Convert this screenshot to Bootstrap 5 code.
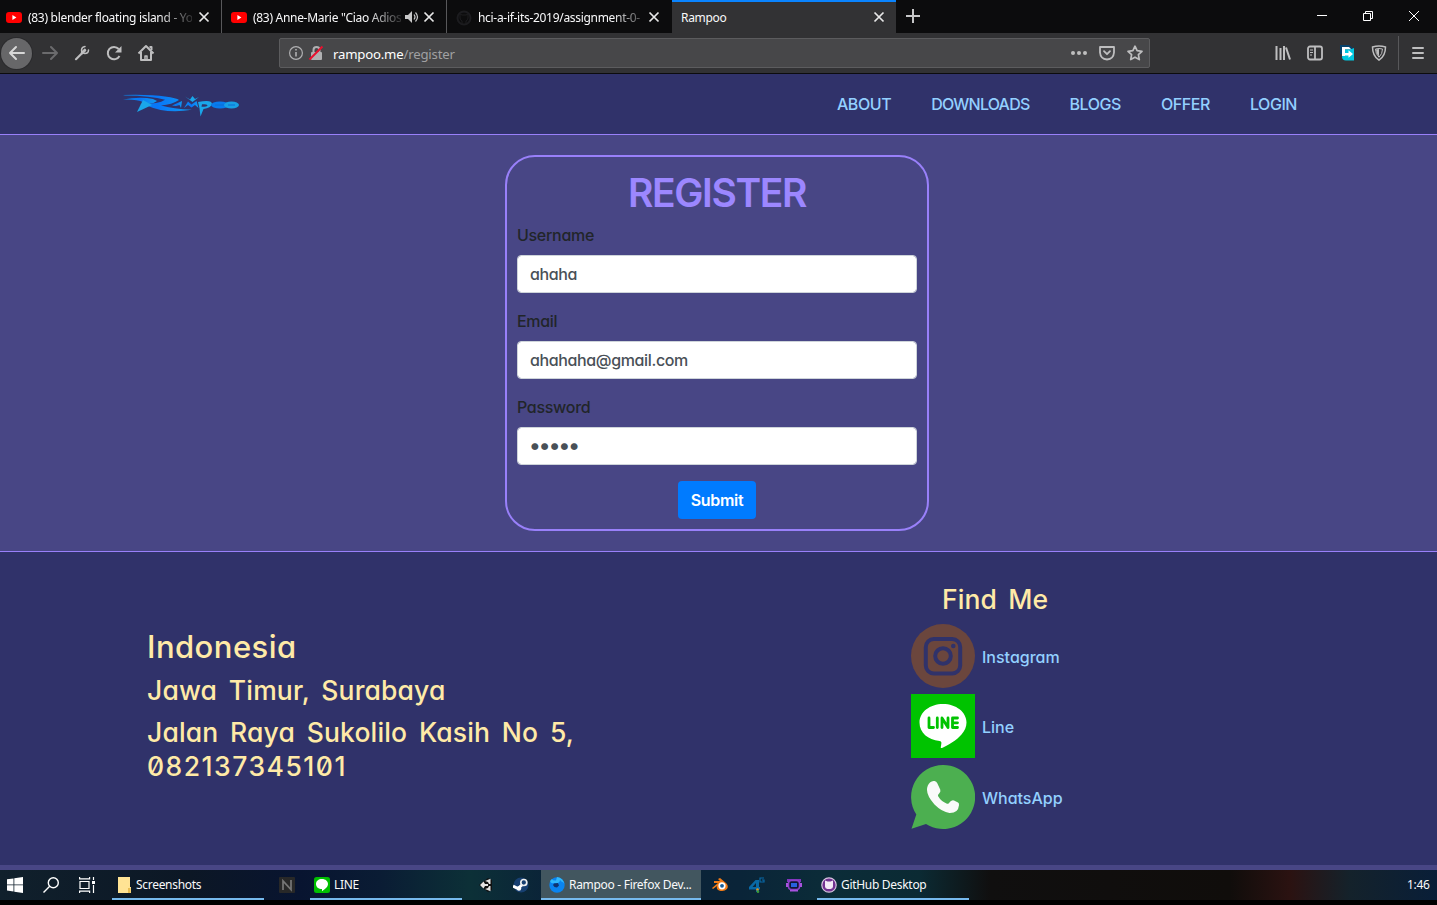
<!DOCTYPE html>
<html lang="en">
<head>
<meta charset="utf-8">
<title>Rampoo</title>
<link rel="stylesheet" href="https://cdn.jsdelivr.net/npm/bootstrap@5.3.0/dist/css/bootstrap.min.css">
<script src="https://cdn.jsdelivr.net/npm/bootstrap@5.3.0/dist/js/bootstrap.bundle.min.js"></script>
<style>
body{width:1437px;height:905px;overflow:hidden;background:#484685;font-family:Inter,"Noto Sans",sans-serif;font-weight:500;font-size:16px;color:#212529;font-feature-settings:"cv11","zero"}
svg{display:block;flex:none}
.chrome{font-family:"Noto Sans",sans-serif;font-weight:400;font-size:12px;letter-spacing:-.3px;font-feature-settings:normal;color:#f9f9fa}
.tabstrip{height:33px;background:#0c0c0d}
.tab{height:33px;width:225px;padding:2px 9px 0 9px;border-right:1px solid #58585a;white-space:nowrap}
.tab .ttl{overflow:hidden;flex:1 1 0;margin-left:6px;line-height:20px;-webkit-mask-image:linear-gradient(90deg,#000 calc(100% - 34px),rgba(0,0,0,.15))}
.tab.first-tab{width:222px;padding-left:6px}
.tab.third{border-right:0;padding-right:10px}
.tab.current{width:224px;background:#323234;border:0;border-top:2px solid #0a84ff;padding:0 9px 0 9px}
.tab.current .ttl{margin:0;-webkit-mask-image:none}
.wctl{width:46px}
.toolbar{height:41px;background:#323234;border-bottom:1px solid #0c0c0d;color:#bebebf}
.backbtn{width:31px;height:31px;margin:0 2px 0 1px;border-radius:50%;background:#676769;box-shadow:0 0 0 1px #2a2a2c}
.tool{width:32px}
.urlbar{width:871px;height:30px;margin-left:117px;background:#474749;border:1px solid #5c5c5e;border-radius:2px;padding:0 6px 0 8px;font-size:13.200px;letter-spacing:-.2px;color:#a0a0a2}
.urltext{margin-left:9px;padding-top:3px}
.sitenav{height:61px;background:#30326a;border-bottom:1px solid #9980fa;padding:0 140px 0 121px}
.sitenav a,.social a{color:#93d0ff;text-decoration:none}
.sitenav .menu{gap:40px}
.sitenav .menu a{white-space:nowrap;line-height:24px;letter-spacing:-.44px}
.sitenav .menu a.wide{letter-spacing:-.78px}
.regcard{width:424px;height:376px;margin:20px 0 20px 505px;border:2px solid #9980fa;border-radius:30px;padding:10px}
.regcard h1{font-size:39px;height:48px;line-height:51px;margin:0 0 8px;color:#9c87ff;text-align:center;letter-spacing:-1.400px;font-weight:600}
.regcard label{display:block;line-height:24px;height:24px;margin-bottom:8px;letter-spacing:-.3px}
.regcard .form-control{height:38px;border:1px solid #ced4da;border-radius:4px;padding:6px 12px;font-weight:500;color:#495057;margin-bottom:16px;font-feature-settings:inherit;letter-spacing:-.37px}
.regcard .form-control[type=password]{font-size:22px;letter-spacing:-1.900px;padding-top:5px;padding-bottom:7px;padding-left:11px}
.btn-submit{background:#007bff;color:#fff;width:78px;height:38px;border-radius:4px;font-weight:600;padding:0;letter-spacing:-.3px}
.foot{height:314px;background:#30326a;border-top:1px solid #9980fa;padding:31px 0 0 147px;color:#ffeaa7}
.foot h2,.foot h3{font-weight:500;margin-bottom:8px;white-space:nowrap}
.foot h2{font-size:31px;line-height:38.400px;letter-spacing:.45px}
.foot h3{font-size:26.500px;line-height:33.600px;letter-spacing:.15px;word-spacing:4.500px}
.foot .phone{letter-spacing:1.500px}
.foot .find{letter-spacing:.1px;word-spacing:4px}
.address{width:764px;padding-top:45px}
.social{line-height:24px;letter-spacing:0}
.social a{gap:7px;height:64px;margin-bottom:6.500px}
.social a svg{margin-top:-2px}
.taskbar{height:30px;background:linear-gradient(90deg,#10202c 0,#0c1725 190px,#081430 300px,#0a1c34 380px,#0c3037 470px,#0a2138 560px,#0a2438 740px,#0b2c38 830px,#0b2a33 920px,#100f0f 990px,#100d0b 1230px,#2b1211 1290px,#14222b 1350px,#091e38 1437px);margin-top:5px}
.cell{height:30px;display:flex;align-items:center;justify-content:center}
.task{height:30px;width:152px;border-bottom:2px solid #76b9ed;padding-left:4px;white-space:nowrap;padding-top:2px}
.clock{margin-left:438px}
.base{height:5px;background:#000}
</style>
</head>
<body>
<div class="chrome">
  <div class="tabstrip d-flex">
    <div class="tab first-tab d-flex align-items-center">
      <svg width="16" height="16"><rect x="0" y="2" width="16" height="11" rx="3" fill="#f00"/><path d="M6.400 5v5l4-2.500z" fill="#fff"/></svg>
      <span class="ttl">(83) blender floating island - Yo</span>
      <svg class="ms-1" width="16" height="16" stroke="#e8e8e8" stroke-width="1.7"><path d="M3.500 2.500l9 9M12.500 2.500l-9 9"/></svg>
    </div>
    <div class="tab d-flex align-items-center">
      <svg width="16" height="16"><rect x="0" y="2" width="16" height="11" rx="3" fill="#f00"/><path d="M6.400 5v5l4-2.500z" fill="#fff"/></svg>
      <span class="ttl">(83) Anne-Marie "Ciao Adios</span>
      <svg class="ms-1" width="16" height="16" fill="#c8c8c8"><path d="M0 5h3l4-4v12l-4-4H0z"/><path d="M9 4.500q2 2.500 0 5M10.500 2.500q4 4.500 0 9" fill="none" stroke="#c8c8c8" stroke-width="1.200"/></svg>
      <svg width="16" height="16" stroke="#e8e8e8" stroke-width="1.7"><path d="M3.500 2.500l9 9M12.500 2.500l-9 9"/></svg>
    </div>
    <div class="tab third d-flex align-items-center">
      <svg width="16" height="16" fill="none" stroke="#1c1c1f" stroke-width="2"><circle cx="8" cy="8" r="6.500"/><path d="M6 15v-4q-2-1-2-3V4l2 1h4l2-1v4q0 2-2 3v4" stroke-width="1"/></svg>
      <span class="ttl">hci-a-if-its-2019/assignment-0-</span>
      <svg width="16" height="16" stroke="#e8e8e8" stroke-width="1.7"><path d="M3.500 2.500l9 9M12.500 2.500l-9 9"/></svg>
    </div>
    <div class="tab current d-flex align-items-center">
      <span class="ttl">Rampoo</span>
      <svg width="16" height="16" stroke="#e8e8e8" stroke-width="1.7"><path d="M3.500 2.500l9 9M12.500 2.500l-9 9"/></svg>
    </div>
    <div class="cell" style="width:34px;padding-top:2px"><svg width="16" height="16" stroke="#c6c6c7" stroke-width="2"><path d="M8 1v14M1 8h14"/></svg></div>
    <div class="ms-auto d-flex">
      <div class="cell wctl"><svg width="12" height="12" stroke="#fff"><path d="M1 6.500h10"/></svg></div>
      <div class="cell wctl"><svg width="12" height="12" fill="none" stroke="#fff"><path d="M1.500 4.500h7v7h-7zM3.500 4V2.500h7v7H9"/></svg></div>
      <div class="cell wctl"><svg width="12" height="12" stroke="#fff"><path d="M1 2l10 10M11 2L1 12"/></svg></div>
    </div>
  </div>
  <div class="toolbar d-flex align-items-center">
    <div class="backbtn d-flex align-items-center justify-content-center"><svg width="17" height="16" fill="none" stroke="#d8d8d8" stroke-width="2" stroke-linecap="round" stroke-linejoin="round"><path d="M16 8H2M8 2L2 8l6 6"/></svg></div>
    <div class="tool cell"><svg width="16" height="16" fill="none" stroke="#6b6b6d" stroke-width="2" stroke-linecap="round" stroke-linejoin="round"><path d="M1 8h14M9 2l6 6-6 6"/></svg></div>
    <div class="tool cell"><svg width="16" height="16" fill="none" stroke="#bebebf" stroke-linecap="round"><path d="M2 14.200l6-6" stroke-width="2.200"/><path d="M14.500 5q0 3.500-3.700 3.500Q7.500 8.200 7.500 5 7.800 1.800 11 1.500" stroke-width="1.500"/><path d="M8.300 7.700l2.500-2.500" stroke-width="3"/></svg></div>
    <div class="tool cell"><svg width="16" height="16" fill="none" stroke="#bebebf" stroke-width="2"><path d="M13.500 11A6.200 6.200 0 1 1 12.700 4"/><path d="M15.500 1v6.500H9z" fill="#bebebf" stroke="none"/></svg></div>
    <div class="tool cell"><svg width="18" height="18" fill="none" stroke="#bebebf" stroke-width="2" stroke-linejoin="round"><path d="M1.500 9.500L9 2l7.500 7.500M4 8v8h10V8"/><path d="M8 16v-4h2v4" stroke-width="1.500"/><path d="M12.500 3h2v3"/></svg></div>
    <div class="urlbar d-flex align-items-center">
      <svg width="16" height="16" fill="none" stroke="#b0b0b2" stroke-width="1.200"><circle cx="8" cy="8" r="6.400"/><path d="M8 7v4.500M8 4v1.500" stroke-width="1.600"/></svg>
      <svg style="margin-left:4px" width="16" height="16" fill="none"><rect x="3" y="7" width="11" height="8" rx="1" fill="#b0b0b2"/><path d="M5.500 8V5a3 3 0 0 1 6 0v3" stroke="#b0b0b2" stroke-width="2"/><path d="M1.500 14.500l13-13" stroke="#e9102f" stroke-width="2"/></svg>
      <span class="urltext"><span class="text-white">rampoo.me</span>/register</span>
      <svg class="ms-auto" width="16" height="16" fill="#bebebf"><circle cx="2" cy="8" r="2"/><circle cx="8" cy="8" r="2"/><circle cx="14" cy="8" r="2"/></svg>
      <svg style="margin-left:12px" width="16" height="16" fill="none" stroke="#bebebf" stroke-width="1.800" stroke-linecap="round" stroke-linejoin="round"><path d="M1 2h14v5.500q-.5 6.500-7 7-6.500-.5-7-7z"/><path d="M5 6.200l3 3 3-3"/></svg>
      <svg style="margin-left:12px" width="16" height="16" fill="none" stroke="#bebebf" stroke-width="1.700" stroke-linejoin="round"><path d="M8 1.200l2.100 4.500 4.900.6-3.600 3.400.9 4.900L8 12.200l-4.300 2.400.9-4.900L1 6.300l4.900-.6z"/></svg>
    </div>
    <div class="tool cell" style="margin-left:117px"><svg width="16" height="16" stroke="#bebebf" stroke-width="2"><path d="M1.500 1v14M5.500 3v12M9 1v14M11 2.500l4 12"/></svg></div>
    <div class="tool cell"><svg width="16" height="16" fill="none" stroke="#bebebf" stroke-width="1.800"><rect x="1" y="1.500" width="14" height="13" rx="2"/><path d="M8 2v12"/><path d="M3 5h3M3 7.500h3M3 10h2" stroke-width="1"/></svg></div>
    <div class="tool cell"><svg width="16" height="16"><path d="M1 0h9l5 4v5H1z" fill="#06416b"/><path d="M3 11.500L8 6l7-3v12.500H7q-4 0-4-4z" fill="#00c8e0"/><path d="M3 2h7l2.500 2.500H6V11H3z" fill="#fff"/><path d="M6 4.500h6L15 6v3H6z" fill="#00c8e0"/><path d="M5 8h4.500V5.200L14 9l-4.500 3.800V10.500H5z" fill="#fff"/></svg></div>
    <div class="tool cell"><svg width="16" height="16" fill="none" stroke="#bebebf" stroke-width="1.500"><path d="M1.500 2Q8 0 14.500 2 14.500 11 8 15.200 1.500 11 1.500 2z"/><path d="M4.500 4Q8 3 11.500 4 11.500 9 8 12.200 4.500 9 4.500 4z" stroke-width="1"/><path d="M8 4v7.500Q5.500 9 5 4.500z" fill="#bebebf" stroke="none"/></svg></div>
    <div style="width:1px;height:34px;margin:0 3px;background:#58585a"></div>
    <div class="tool cell"><svg width="14" height="14" stroke="#bebebf" stroke-width="2" stroke-linecap="round"><path d="M2 2h10M2 7h10M2 12h10"/></svg></div>
  </div>
</div>

<nav class="sitenav d-flex align-items-center justify-content-between">
  <svg width="120" height="26" viewBox="120 91 120 26">
    <defs><linearGradient id="flame"><stop offset="0" stop-color="#0a86ea"/><stop offset=".5" stop-color="#0876f8"/><stop offset="1" stop-color="#129cf0"/></linearGradient></defs>
    <g fill="url(#flame)">
      <path d="M122 95Q150 94.300 164 96.500q12 1.500 14 3.500-7 4.500-18 5.600 12 3.600 31 4.200-26 4.200-44-3.800-9 .5-7-2 18 0 24-4.300-14-4-40-4.200z"/>
      <path d="M122 99.500q17-3 30-.5l4 2q-4 3-8 3l-6-2q-6-3-20-2.500z"/>
      <path d="M171 105.500l10-4.500-1 7-1.500-3-3.500 1z"/>
      <path d="M183 108l4-6.500 3.500 3 5-3.500 2 7-3.500-3-3.500 2.500-3.500-2.500z"/>
    </g>
    <g fill="#1aa6ea"><path d="M184 96.500l5 3 2.500-3.500 2.500 3 4-2-6.500 5z"/><path d="M142 100l9 5-15 7z"/><path fill-rule="evenodd" d="M197 102q14-3 14 2-1 4-8.500 5l-3 7.500-1-8zm4 2.300l-.5 2.500q6 0 6-1.500-1-1.500-5.500-1z"/></g>
    <ellipse cx="219" cy="105" rx="9" ry="3.500" fill="#087bed"/><ellipse cx="230.500" cy="105" rx="7.500" ry="3.500" fill="#189fe5"/><path d="M214 105h9m4 0h7" stroke="#0b6fd6" stroke-width="1"/>
  </svg>
  <div class="menu d-flex"><a href="#">ABOUT</a><a href="#" class="wide">DOWNLOADS</a><a href="#">BLOGS</a><a href="#">OFFER</a><a href="#">LOGIN</a></div>
</nav>

<main class="overflow-hidden">
  <form class="regcard">
    <h1>REGISTER</h1>
    <label for="u">Username</label><input id="u" class="form-control" value="ahaha">
    <label for="e">Email</label><input id="e" class="form-control" value="ahahaha@gmail.com">
    <label for="p">Password</label><input id="p" type="password" class="form-control" value="12345">
    <div class="text-center"><button type="button" class="btn btn-submit">Submit</button></div>
  </form>
</main>

<footer class="foot d-flex">
  <div class="address">
    <h2>Indonesia</h2>
    <h3>Jawa Timur, Surabaya</h3>
    <h3>Jalan Raya Sukolilo Kasih No 5,<br><span class="phone">082137345101</span></h3>
  </div>
  <div class="social">
    <h3 class="find" style="margin-left:31px">Find Me</h3>
    <a href="#" class="d-flex align-items-center"><svg width="64" height="64"><circle cx="32" cy="32" r="32" fill="#6b463d"/><g fill="none" stroke="#30326a" stroke-width="4"><rect x="14.800" y="15" width="34.400" height="34.500" rx="8"/><circle cx="32" cy="32" r="7.800"/></g><circle cx="42.300" cy="22" r="2.300" fill="#30326a"/></svg><span>Instagram</span></a>
    <a href="#" class="d-flex align-items-center"><svg width="64" height="64"><path fill="#00c300" d="M0 0h64v64H0z"/><path fill="#fff" d="M32 10c13 0 23.500 8 23.500 18.500 0 4.500-2 8.500-5 12C46 46 36 52 31 54c-1.500.5-1.300-.8-1-2 .5-3 1-4.500-1.500-5C17 46 8.500 38.500 8.500 28.500 8.500 18 19 10 32 10z"/><g fill="none" stroke="#00c300" stroke-width="2.800" stroke-linecap="round" stroke-linejoin="round"><path d="M18 24v9.500h4.500M26.300 24v9.500M31 33.500V24l6 9.500V24M46.500 24h-5v9.500h5M41.500 28.800h5"/></g></svg><span>Line</span></a>
    <a href="#" class="d-flex align-items-center"><svg width="64" height="64"><path fill="#4caf50" d="M32 0a32 32 0 1 1-17 59L.5 63.700 5.300 49.500A32 32 0 0 1 32 0z"/><path fill="#fafafa" d="M19 17.500q2-2 4.500-1.500 2 .3 2.800 2.300l3 6.500q.5 2-1 3.500-1.700 1.500-1.300 2.800Q30 36.500 36 38.800q1.200.3 2-.8 2.500-3.500 5-2.500l4 2q1.300.7 1 2.700-.8 8-9.500 7.800Q31 47 23.500 39.500 16 31 16 25q0-5 3-7.500z"/></svg><span>WhatsApp</span></a>
  </div>
</footer>

<div class="chrome">
  <div class="taskbar d-flex">
    <div class="cell" style="width:30px"><svg width="16" height="16" fill="#fff"><path d="M0 2.300L6.500 1.400v6.100H0zM7.300 1.300L16 0v7.500H7.300zM0 8.300h6.500v6.200L0 13.600zM7.300 8.300H16V16l-8.700-1.300z"/></svg></div>
    <div class="cell" style="width:41px"><svg width="16" height="16" fill="none" stroke="#fff" stroke-width="1.400"><circle cx="10.300" cy="5.700" r="5"/><path d="M6.700 9.300L.5 15.500"/></svg></div>
    <div class="cell" style="width:32px"><svg width="17" height="16" fill="none" stroke="#fff" stroke-width="1.200"><path d="M1 4.500h9v7H1zM.600 0v1.800h10V0M.600 16v-1.800h10V16M14.500 0v3M14.500 8v8"/><path d="M13 4h3v3h-3z" fill="#fff" stroke="none"/></svg></div>
    <div class="task d-flex align-items-center" style="margin-left:9px"><svg width="16" height="16"><path d="M2 0h12v10h1v6H2z" fill="#ffe394"/><path d="M12 11h2.500v5H12z" fill="#e8bd53"/></svg><span class="ms-1">Screenshots</span></div>
    <div class="cell" style="width:46px"><svg width="16" height="16"><rect width="16" height="16" rx="1" fill="#282828"/><path d="M4 13V4l8 8.500V3" fill="none" stroke="#777" stroke-width="1.700"/></svg></div>
    <div class="task d-flex align-items-center"><svg width="16" height="16"><rect width="16" height="16" rx="2.500" fill="#00bf00"/><path d="M8 2c3.500 0 6 2.200 6 5 0 3-3.500 5.500-6 7.200V12C4.500 12 2 10 2 7s2.500-5 6-5z" fill="#fff"/></svg><span class="ms-1">LINE</span></div>
    <div class="cell" style="width:36px;margin-left:6px"><svg width="14" height="14"><path d="M0 7l9-7 4 2v10l-4 2z" fill="#111"/><path d="M1 7l3.500-3.500L6 6h3v2H6l-1.500 2.500zM6 3L11.500.8V6L10 6 9 4zM10 8h1.500v5.200L6 11l3-1z" fill="#e4e4e4"/></svg></div>
    <div class="cell" style="width:34px"><svg width="16" height="16"><circle cx="8" cy="8" r="7.500" fill="#173f70"/><path d="M0 9l5 2.500L10 7" stroke="#fff" stroke-width="3" fill="none"/><circle cx="10.800" cy="5.500" r="3" fill="#173f70" stroke="#eee" stroke-width="1.700"/><circle cx="6" cy="11.500" r="2.200" fill="#fff"/></svg></div>
    <div class="task d-flex align-items-center" style="width:160px;margin-left:3px;background:#42565f;padding-left:8px"><svg width="16" height="16"><circle cx="8" cy="8" r="7.700" fill="#0a84f0"/><path d="M1 4l2-2q1 2 4 1.500L8 0q6 1 7.500 7-1-2-3-2.500L11 3q0 2-2 3H5Q2 7 1 4z" fill="#30b8fb"/><path d="M5 6.500l4-.5 1 2.500-2 2q-3 0-4-2.500z" fill="#10336f"/></svg><span class="ms-1">Rampoo - Firefox Dev...</span></div>
    <div class="cell" style="width:38px"><svg width="17" height="16"><path d="M0 11l6-5H2V4h6L6 2l2-1 6 5q3 3 1 6-3 3-8 1.500Q4 12 5 9l-4 3z" fill="#f27b16"/><circle cx="10" cy="8.800" r="3.600" fill="#fff"/><circle cx="10" cy="8.800" r="1.900" fill="#175e9b"/></svg></div>
    <div class="cell" style="width:36px"><svg width="16" height="16"><path fill-rule="evenodd" d="M6.500 3H10v7h1v2.500h-1V15H7v-2.500H0V10zM7 6l-3.500 4H7z" fill="#0869a7"/><path d="M15 1h-4v4h4V3h-2" fill="none" stroke="#0869a7" stroke-width="1.200"/><circle cx="8.500" cy="12.500" r="1.300" fill="#e29522"/><circle cx="9" cy="14.700" r="1.300" fill="#3a9a35"/></svg></div>
    <div class="cell" style="width:37px"><svg width="16" height="14"><path d="M1 1h14v3H1z" fill="#8134bd"/><rect x="2.500" y="2.500" width="11" height="9" rx="3" fill="#101737" stroke="#8f40cb" stroke-width="1.500"/><path d="M5 5h6v4H5z" fill="#2860df"/><path d="M0 5h2v4H0zM14 5h2v4h-2zM4 12h8v1.500H4z" fill="#a853df"/></svg></div>
    <div class="task d-flex align-items-center" style="margin-left:5px"><svg width="16" height="16"><circle cx="8" cy="8" r="7.200" fill="#713090" stroke="#d7c4e0" stroke-width="1.200"/><path d="M4 3.500l2.500 1h3l2.500-1v6q0 2-2.500 2.500h-3Q4 11.500 4 9.500z" fill="#f3e9f6"/></svg><span class="ms-1">GitHub Desktop</span></div>
    <div class="cell clock">1:46</div>
  </div>
  <div class="base"></div>
</div>
</body>
</html>
